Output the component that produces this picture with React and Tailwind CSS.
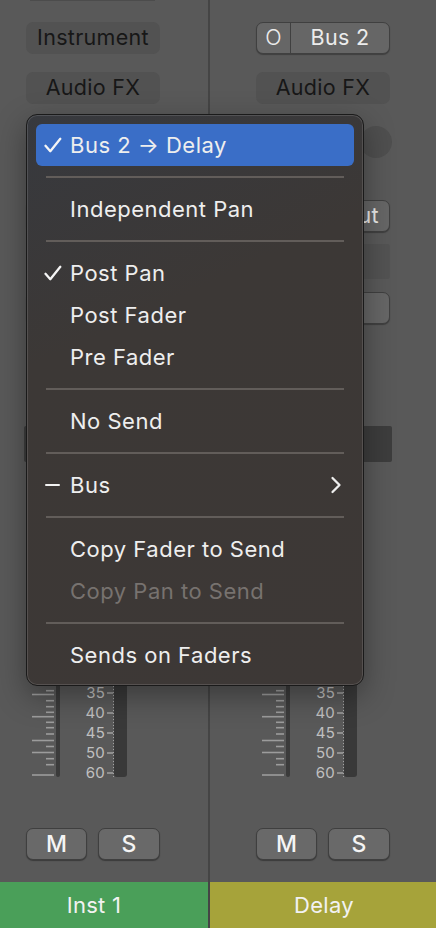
import React from "react";

const FONT = "font-['Inter','Noto_Sans',sans-serif]";

const TICKS = [
  [690.7, 0], [694.5, 1], [700.7, 0], [706.7, 0], [712.3, 0], [716.7, 1],
  [722.3, 0], [727.7, 0], [734, 0], [740.5, 1], [746.5, 0], [752.5, 1],
  [758.7, 0], [764.7, 0], [775, 1],
];
const LABELS = ["35", "40", "45", "50", "60"];
const ROW_TOP = 470;

function DarkSlot({ label }) {
  return (
    <div className="ml-[46px] w-[134px] h-[32px] rounded-[7px] bg-[#525252] flex items-center justify-center text-[21.5px] tracking-[0.3px] text-[#171717] leading-none">
      {label}
    </div>
  );
}

function LightButton({ children, h = "h-[32px]" }) {
  return (
    <div className={`ml-[46px] w-[134px] ${h} rounded-[7px] bg-[#666666] border border-[#404040] shadow-[0_1px_1px_rgba(0,0,0,0.3)] flex items-center justify-center text-[21.5px] tracking-[0.3px] text-[#ebebeb] leading-none`}>
      {children}
    </div>
  );
}

function FaderScale() {
  const h = 313;
  return (
    <div className="mt-[8px] h-[313px] flex items-stretch">
      <svg className="ml-[52px] shrink-0" width="22" height={h}>
        {TICKS.map(([y, long], i) => (
          <line key={i} x1={long ? 0 : 14} x2="22" y1={y - ROW_TOP} y2={y - ROW_TOP} stroke="#9c9c9c" strokeWidth="1.6" />
        ))}
      </svg>
      <div className="ml-[2px] w-[4px] mb-[6px] bg-[#3b3b3b] rounded-b-[2px]" />
      <div className="w-[45px] flex flex-col justify-end items-end text-[15px] tracking-[0.2px] text-[#c0c0c0] leading-[20px]">
        {LABELS.map((l) => (
          <div key={l} className="h-[20px]">{l}</div>
        ))}
      </div>
      <svg className="ml-[2px] shrink-0" width="7" height={h}>
        <line x1="6.5" x2="6.5" y1="0" y2={h - 6} stroke="#a3a3a3" strokeWidth="1" strokeDasharray="1 2" />
        {LABELS.map((l, i) => {
          const y = 693 + i * 20 - ROW_TOP;
          return <line key={l} x1="0" x2="6" y1={y} y2={y} stroke="#a3a3a3" strokeWidth="1.5" />;
        })}
      </svg>
      <div className="w-[13px] mb-[6px] bg-[#393939] rounded-b-[3px]" />
    </div>
  );
}

function MuteSolo() {
  const cls = "h-[32px] rounded-[7px] bg-[#696969] border border-[#3f3f3f] shadow-[0_1px_1px_rgba(0,0,0,0.35)] flex items-center justify-center text-[23px] font-medium text-[#f4f4f4] leading-none";
  return (
    <div className="mt-[45px] flex">
      <div className={`ml-[46px] w-[61px] ${cls}`}>M</div>
      <div className={`ml-[11px] w-[62px] ${cls}`}>S</div>
    </div>
  );
}

function NameBar({ name, color }) {
  return (
    <div className={`mt-[22px] h-[46px] ${color} flex items-center justify-center text-[22px] tracking-[0.3px] text-[#f2f2f2]`}>
      {name}
    </div>
  );
}

function Channel({ left }) {
  return (
    <div className={`w-[228px] shrink-0 flex flex-col ${left ? "ml-[-20px]" : ""}`}>
      {left ? (
        <>
          <div className="ml-[50px] w-[125px] h-[1px] bg-[#4c4c4c]" />
          <div className="mt-[21px]"><DarkSlot label="Instrument" /></div>
        </>
      ) : (
        <div className="mt-[22px] ml-[46px] w-[134px] h-[32px] rounded-[7px] bg-[#666666] border border-[#404040] shadow-[0_1px_1px_rgba(0,0,0,0.3)] flex text-[21.5px] tracking-[0.3px] text-[#ececec] leading-none">
          <div className="w-[34px] flex items-center justify-center border-r border-[#404040] font-light">O</div>
          <div className="flex-1 flex items-center justify-center">Bus 2</div>
        </div>
      )}
      <div className="mt-[18px]"><DarkSlot label="Audio FX" /></div>
      <div className="mt-[22px] ml-[150px] w-[32px] h-[32px] rounded-full bg-[#4f4f4f]" />
      <div className="mt-[42px]"><LightButton>{left ? null : "Stereo Out"}</LightButton></div>
      <div className="mt-[12px] ml-[46px] w-[134px] h-[35px] rounded-[3px] bg-[#535353]" />
      <div className="mt-[13px]"><LightButton>{null}</LightButton></div>
      <div className="mt-[102px] ml-[44px] w-[138px] h-[36px] rounded-[2px] bg-[#3d3d3d]" />
      <FaderScale />
      <MuteSolo />
      <NameBar name={left ? "Inst 1" : "Delay"} color={left ? "bg-[#4a9f59]" : "bg-[#a6a33a]"} />
    </div>
  );
}

function Check() {
  return (
    <svg width="18" height="16" viewBox="0 0 18 16" className="block">
      <path d="M1.5 8.8 L6.3 14.2 L16.3 1.8" fill="none" stroke="#f5f5f5" strokeWidth="2.3" strokeLinecap="round" strokeLinejoin="round" />
    </svg>
  );
}

function Item({ children, mark, highlight, disabled, sub }) {
  return (
    <div className={`h-[42px] shrink-0 flex items-center pl-[8px] pr-[12px] rounded-[6px] ${highlight ? "bg-[#3a6ec7]" : ""}`}>
      <div className="w-[26px] shrink-0 flex items-center">
        {mark === "check" && <Check />}
        {mark === "dash" && <div className="ml-[1px] w-[15px] h-[2.5px] bg-[#f2f2f2] rounded-[1px]" />}
      </div>
      <div className={`flex-1 text-[22px] leading-none tracking-[0.5px] ${disabled ? "text-[#77726f]" : "text-[#eeeeee]"}`}>
        {children}
      </div>
      {sub && (
        <svg width="12" height="18" viewBox="0 0 12 18" className="block">
          <path d="M2.5 2 L9.5 9 L2.5 16" fill="none" stroke="#eeeeee" strokeWidth="2.3" strokeLinecap="round" strokeLinejoin="round" />
        </svg>
      )}
    </div>
  );
}

function Sep() {
  return (
    <div className="h-[22px] shrink-0 flex items-center px-[10px]">
      <div className="flex-1 h-[1.5px] bg-[#625d5a]" />
    </div>
  );
}

function Menu() {
  return (
    <div className="absolute left-[26px] top-[114px] w-[338px] h-[572px] rounded-[11px] border border-[#1a1a1a] bg-[linear-gradient(155deg,#37393e_0%,#3c3836_35%,#3d3836_100%)] shadow-[inset_0_0_0_1px_rgba(255,255,255,0.13),0_10px_30px_rgba(0,0,0,0.35)] p-[9px] flex flex-col">
      <Item mark="check" highlight>Bus 2 → Delay</Item>
      <Sep />
      <Item>Independent Pan</Item>
      <Sep />
      <Item mark="check">Post Pan</Item>
      <Item>Post Fader</Item>
      <Item>Pre Fader</Item>
      <Sep />
      <Item>No Send</Item>
      <Sep />
      <Item mark="dash" sub>Bus</Item>
      <Sep />
      <Item>Copy Fader to Send</Item>
      <Item disabled>Copy Pan to Send</Item>
      <Sep />
      <Item>Sends on Faders</Item>
    </div>
  );
}

export default function App() {
  return (
    <div className={`relative w-[436px] h-[928px] overflow-hidden bg-[#595959] flex ${FONT}`}>
      <Channel left />
      <div className="w-[2px] shrink-0 bg-[#454545]" />
      <Channel />
      <Menu />
    </div>
  );
}
